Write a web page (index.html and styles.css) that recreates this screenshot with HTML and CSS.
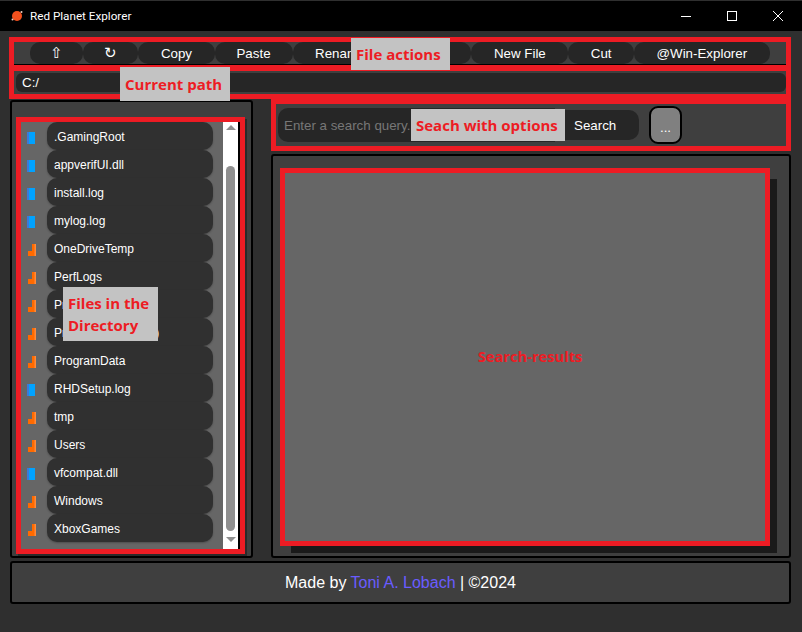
FILE: index.html
```html
<!DOCTYPE html>
<html lang="en">
<head>
  <meta charset="UTF-8" />
  <meta name="viewport" content="width=device-width, initial-scale=1.0"/>
  <title>Red Planet Explorer</title>
  <link rel="stylesheet" href="styles.css">
</head>
<body>

<svg class="sprites" width="0" height="0" aria-hidden="true">
  <symbol id="file-icon" viewBox="0 0 10 12">
    <rect x="0" y="0" width="2" height="12" fill="#3d78d8"/>
    <rect x="2" y="0" width="6" height="12" fill="#00a2ff"/>
  </symbol>
  <symbol id="folder-icon" viewBox="0 0 10 12">
    <path d="M5 0h4v12H1V7h4z" fill="#ff6a00"/>
    <rect x="7.5" y="0" width="1.5" height="12" fill="#ff8a3a"/>
  </symbol>
</svg>

<header class="titlebar">
  <svg class="app-icon" width="14" height="14" viewBox="0 0 14 14">
    <circle cx="7" cy="7" r="5" fill="#f4511e"/>
    <circle cx="2.5" cy="10.5" r="1" fill="#f5d0c0"/>
    <circle cx="11.5" cy="3" r="1" fill="#f5d0c0"/>
  </svg>
  <span class="app-name">Red Planet Explorer</span>
  <div class="window-buttons">
    <svg width="12" height="12" viewBox="0 0 12 12"><path d="M1 6.5h10" stroke="#fff" fill="none"/></svg>
    <svg width="12" height="12" viewBox="0 0 12 12"><rect x="1.5" y="1.5" width="9" height="9" stroke="#fff" fill="none"/></svg>
    <svg width="12" height="12" viewBox="0 0 12 12"><path d="M1 1l10 10M11 1L1 11" stroke="#fff" fill="none"/></svg>
  </div>
</header>

<main class="app">
  <section class="actions-frame">
    <nav class="toolbar">
      <button class="glyph-up">⇧</button>
      <button class="glyph-reload">↻</button>
      <button>Copy</button>
      <button class="btn-paste">Paste</button>
      <button>Rename</button>
      <button>Delete</button>
      <button>New File</button>
      <button>Cut</button>
      <button>@Win-Explorer</button>
    </nav>
  </section>

  <section class="path-frame">
    <div class="path-input">C:/</div>
  </section>

  <div class="columns">
    <aside class="files-panel">
      <div class="files-frame">
        <ul class="file-list">
          <li><svg class="kind"><use href="#file-icon"/></svg><span class="file-name">.GamingRoot</span></li>
          <li><svg class="kind"><use href="#file-icon"/></svg><span class="file-name">appverifUI.dll</span></li>
          <li><svg class="kind"><use href="#file-icon"/></svg><span class="file-name">install.log</span></li>
          <li><svg class="kind"><use href="#file-icon"/></svg><span class="file-name">mylog.log</span></li>
          <li><svg class="kind"><use href="#folder-icon"/></svg><span class="file-name">OneDriveTemp</span></li>
          <li><svg class="kind"><use href="#folder-icon"/></svg><span class="file-name">PerfLogs</span></li>
          <li><svg class="kind"><use href="#folder-icon"/></svg><span class="file-name">Program Files</span></li>
          <li><svg class="kind"><use href="#folder-icon"/></svg><span class="file-name">Program Files (x86)</span></li>
          <li><svg class="kind"><use href="#folder-icon"/></svg><span class="file-name">ProgramData</span></li>
          <li><svg class="kind"><use href="#file-icon"/></svg><span class="file-name">RHDSetup.log</span></li>
          <li><svg class="kind"><use href="#folder-icon"/></svg><span class="file-name">tmp</span></li>
          <li><svg class="kind"><use href="#folder-icon"/></svg><span class="file-name">Users</span></li>
          <li><svg class="kind"><use href="#file-icon"/></svg><span class="file-name">vfcompat.dll</span></li>
          <li><svg class="kind"><use href="#folder-icon"/></svg><span class="file-name">Windows</span></li>
          <li><svg class="kind"><use href="#folder-icon"/></svg><span class="file-name">XboxGames</span></li>
        </ul>
        <div class="scrollbar">
          <span class="arrow-up"></span>
          <span class="thumb"></span>
          <span class="arrow-down"></span>
        </div>
      </div>
    </aside>

    <div class="right-column">
      <section class="search-frame">
        <div class="search-box">
          <input type="text" class="search-input" placeholder="Enter a search query..." />
          <button class="search-button">Search</button>
        </div>
        <button class="options-button">...</button>
      </section>

      <section class="results-panel">
        <div class="results-frame">Search-results</div>
      </section>
    </div>
  </div>

  <footer class="footer">
    <span>Made by <a href="#">Toni A. Lobach</a> | ©2024</span>
  </footer>
</main>

<div class="callout callout-actions">File actions</div>
<div class="callout callout-path">Current path</div>
<div class="callout callout-search">Seach with options</div>
<div class="callout callout-files">Files in the Directory</div>

</body>
</html>
```

FILE: styles.css
```css
* {
  box-sizing: border-box;
}

body {
  font-family: 'Liberation Sans', Arial, sans-serif;
  margin: 0;
  width: 802px;
  height: 632px;
  overflow: hidden;
  position: relative;
  background: #2f2f2f;
  color: #fff;
}

.sprites {
  display: block;
  height: 0;
}

/* title bar */
.titlebar {
  height: 31px;
  background: #000;
  border-top: 1px solid #2f2f2f;
  display: flex;
  align-items: center;
  padding-left: 10px;
}

.app-icon {
  margin-right: 6px;
}

.app-name {
  font-family: Roboto, sans-serif;
  font-size: 11.7px;
}

.window-buttons {
  margin-left: auto;
  display: flex;
  gap: 34px;
  padding-right: 18px;
}

/* main area */
.app {
  padding: 6px 11px 0 9px;
}

.actions-frame {
  height: 34px;
  border: 5px solid #ed1c24;
  border-bottom-width: 6px;
}

.toolbar {
  height: 23px;
  background: #3f3f3f;
  border-bottom: 1px solid #000;
  display: flex;
  justify-content: center;
}

.toolbar button {
  height: 22px;
  padding: 0 22.5px;
  border: none;
  border-radius: 10px;
  background: #262626;
  color: #fff;
  font-family: 'Liberation Sans', Arial, sans-serif;
  font-size: 13.33px;
}

.toolbar .glyph-up {
  width: 53px;
  padding: 0;
  font-size: 15px;
}

.toolbar .glyph-reload {
  width: 55px;
  padding: 0;
  font-size: 15px;
}

.toolbar .btn-paste {
  width: 78px;
  padding: 0;
}

.path-frame {
  height: 28px;
  border: 5px solid #ed1c24;
  border-top: 0;
  padding: 2px 0;
  background: #3f3f3f;
}

.path-input {
  height: 19px;
  margin-left: 2px;
  padding-left: 6px;
  border-radius: 6px;
  background: #262626;
  font-size: 13.33px;
  line-height: 19px;
}

.columns {
  display: grid;
  grid-template-columns: 244px 1fr;
  column-gap: 18px;
}

/* file list */
.files-panel {
  height: 458px;
  margin: 1px 0 0 1px;
  padding: 15px 6px 2px 4px;
  background: #3f3f3f;
  border: 2px solid #000;
  border-radius: 3px;
}

.files-frame {
  height: 437px;
  display: flex;
  border: 5px solid #ed1c24;
  background: #000;
  box-shadow: 2px 2px 0 #2a2a2a;
}

.file-list {
  width: 202px;
  margin: 0;
  padding: 0 10px 0 6px;
  list-style: none;
  background: #666;
}

.file-list li {
  height: 28px;
  display: flex;
  align-items: center;
}

.kind {
  width: 10px;
  height: 12px;
  margin: 4px 10px 0 0;
  flex-shrink: 0;
}

.file-name {
  flex: 1;
  height: 28px;
  padding: 1px 0 0 7px;
  border-radius: 10px;
  background: #303030;
  box-shadow: 0 1px 2px rgba(0,0,0,0.25);
  font-size: 12px;
  line-height: 28px;
  white-space: nowrap;
}

.scrollbar {
  width: 15px;
  background: #fff;
  display: flex;
  flex-direction: column;
  align-items: center;
}

.arrow-up {
  margin-top: 3px;
  border: 5px solid transparent;
  border-top: 0;
  border-bottom-color: #8f8f8f;
}

.thumb {
  width: 9px;
  height: 365px;
  margin: 36px 0 6px;
  border-radius: 5px;
  background: #8f8f8f;
}

.arrow-down {
  border: 5px solid transparent;
  border-bottom: 0;
  border-top-color: #8f8f8f;
}

/* search */
.search-frame {
  height: 52px;
  border: 5px solid #ed1c24;
  background: #3f3f3f;
  display: flex;
  align-items: center;
  padding-left: 2px;
}

.search-box {
  width: 361px;
  display: flex;
  align-items: center;
}

.search-input {
  width: 277px;
  height: 34px;
  padding: 0 6px;
  border: none;
  border-radius: 10px 0 0 10px;
  background: #262626;
  color: #fff;
  font-family: 'Liberation Sans', Arial, sans-serif;
  font-size: 13.33px;
}

.search-input::placeholder {
  color: #777;
}

.search-button {
  flex: 1;
  height: 30px;
  padding: 0 0 0 19px;
  border: none;
  border-radius: 0 10px 10px 0;
  background: #262626;
  color: #fff;
  text-align: left;
  font-family: 'Liberation Sans', Arial, sans-serif;
  font-size: 13.33px;
}

.options-button {
  width: 33px;
  height: 38px;
  margin-left: 10px;
  border: 2px solid #000;
  border-radius: 9px;
  background: #808080;
  color: #fff;
  font-size: 13.33px;
  padding: 5px 0 0;
}

/* results */
.results-panel {
  height: 404px;
  margin-top: 3px;
  padding: 12px 19px 10px 7px;
  background: #3f3f3f;
  border: 2px solid #000;
  border-radius: 3px;
}

.results-frame {
  height: 378px;
  border: 5px solid #ed1c24;
  background: #666;
  box-shadow: 9px 9px 0 -2px #1a1a1a;
  color: #ed1c24;
  font-family: 'Open Sans', sans-serif;
  font-size: 14.7px;
  font-weight: bold;
  display: flex;
  align-items: center;
  justify-content: center;
  padding: 0 0 2px 10px;
}

/* footer */
.footer {
  height: 43px;
  margin: 3px 0 0 1px;
  background: #3f3f3f;
  border: 2px solid #000;
  border-radius: 3px;
  display: flex;
  align-items: center;
  justify-content: center;
  font-size: 16px;
}

.footer a {
  color: #6a5cff;
  text-decoration: none;
}

/* annotations pasted over the screenshot */
.callout {
  position: absolute;
  padding-left: 5px;
  background: #c3c3c3;
  color: #ed1c24;
  font-family: 'Open Sans', sans-serif;
  font-size: 15px;
  font-weight: bold;
  display: flex;
  align-items: center;
  white-space: nowrap;
}

.callout-actions {
  left: 351px;
  top: 38px;
  width: 99px;
  height: 32px;
}

.callout-path {
  left: 120px;
  top: 67px;
  width: 110px;
  height: 34px;
}

.callout-search {
  left: 411px;
  top: 109px;
  width: 154px;
  height: 32px;
}

.callout-files {
  left: 63px;
  top: 287px;
  width: 95px;
  height: 54px;
  white-space: normal;
  line-height: 22px;
}
```
